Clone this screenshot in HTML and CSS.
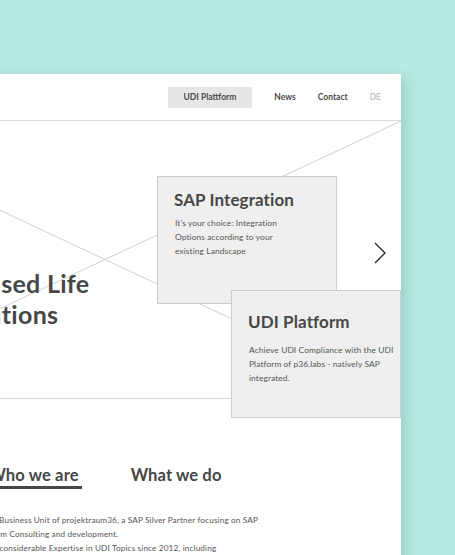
FILE: index.html
```html
<!DOCTYPE html>
<html lang="en">
<head>
<meta charset="utf-8">
<title>p36.labs</title>
<link rel="stylesheet" href="styles.css">
</head>
<body>
<div class="page">
  <header class="header">
    <nav class="nav">
      <a class="nav-item nav-active">UDI Plattform</a>
      <a class="nav-item">News</a>
      <a class="nav-item">Contact</a>
      <a class="nav-item nav-lang">DE</a>
    </nav>
  </header>
  <section class="hero">
    <svg class="hero-placeholder" viewBox="0 0 592 277" preserveAspectRatio="none">
      <line x1="0" y1="0" x2="592" y2="277"/>
      <line x1="592" y1="0" x2="0" y2="277"/>
    </svg>
    <div class="hero-copy">
      <h1 class="hero-title">Your SAP-based Life<br>Science Solutions</h1>
    </div>
    <div class="hero-cards">
      <div class="card card-first">
        <h2 class="card-title">SAP Integration</h2>
        <p class="card-text">It’s your choice: Integration<br>Options according to your<br>existing Landscape</p>
      </div>
      <div class="card card-second">
        <h2 class="card-title">UDI Platform</h2>
        <p class="card-text">Achieve UDI Compliance with the UDI<br>Platform of p36.labs - natively SAP<br>integrated.</p>
      </div>
    </div>
    <button class="hero-next" aria-label="Next">
      <svg viewBox="0 0 12 22" width="12" height="22"><polyline points="1,1 11,11 1,21"/></svg>
    </button>
  </section>
  <section class="about">
    <div class="tabs">
      <span class="tab tab-active">Who we are</span>
      <span class="tab">What we do</span>
    </div>
    <p class="about-text">p36.labs is a Business Unit of projektraum36, a SAP Silver Partner focusing on SAP<br>Cloud Platform Consulting and development.<br>p36.labs has considerable Expertise in UDI Topics since 2012, including</p>
  </section>
</div>
</body>
</html>
```
FILE: styles.css
```css
html, body {
  margin: 0;
  padding: 0;
}
body {
  background: #b9eae2;
  overflow: hidden;
  height: 555px;
  font-family: "Lato", "Liberation Sans", sans-serif;
  color: #474747;
}
.page {
  margin: 74px 0 0 -191px;
  width: 592px;
  min-height: 500px;
  background: #ffffff;
  box-shadow: 5px 4px 12px rgba(40, 110, 100, 0.22);
}
.header {
  height: 46px;
  border-bottom: 1px solid #dadada;
  display: flex;
  align-items: center;
  justify-content: flex-end;
  padding-right: 20px;
}
.nav {
  display: flex;
  align-items: center;
  gap: 22px;
}
.nav-item {
  font-size: 8.5px;
  font-weight: 700;
  color: #4a4a4a;
}
.nav-active {
  background: #e6e6e6;
  padding: 0 16px;
  height: 21px;
  line-height: 21px;
}
.nav-lang {
  color: #c2c2c2;
}
.hero {
  position: relative;
  display: flex;
  height: 277px;
  border-bottom: 1px solid #d4d4d4;
}
.hero-placeholder {
  position: absolute;
  inset: 0;
  width: 100%;
  height: 100%;
  z-index: 0;
}
.hero-placeholder line {
  stroke: #c9c9c9;
  stroke-width: 0.9;
  vector-effect: non-scaling-stroke;
}
.hero-copy {
  flex: 1;
  position: relative;
  z-index: 1;
  padding: 147px 0 0 50px;
}
.hero-title {
  margin: 0;
  font-size: 25px;
  line-height: 31px;
  font-weight: 700;
  letter-spacing: 0.3px;
  color: #474747;
  white-space: nowrap;
}
.hero-cards {
  width: 244px;
  flex-shrink: 0;
  display: flex;
  flex-direction: column;
  padding-top: 55px;
}
.card {
  position: relative;
  flex-shrink: 0;
  box-sizing: border-box;
  background: #efefef;
  border: 1px solid #cdcdcd;
  padding: 12px 8px 0 16px;
}
.card-first {
  z-index: 1;
  width: 180px;
  height: 128px;
}
.card-second {
  z-index: 2;
  width: 170px;
  height: 128px;
  margin-top: -14px;
  align-self: flex-end;
  padding-top: 20px;
}
.card-title {
  margin: 0;
  font-size: 17px;
  line-height: 22px;
  font-weight: 700;
  letter-spacing: 0.1px;
  color: #474747;
}
.card-text {
  margin: 5px 0 0 1px;
  font-size: 8.4px;
  line-height: 14px;
  color: #555555;
  letter-spacing: 0.1px;
  white-space: nowrap;
}
.card-second .card-text {
  margin-top: 10px;
}
.hero-next {
  position: absolute;
  right: 15px;
  top: 121px;
  z-index: 1;
  padding: 0;
  border: 0;
  background: none;
  width: 12px;
  height: 22px;
}
.hero-next svg {
  display: block;
}
.hero-next polyline {
  fill: none;
  stroke: #222222;
  stroke-width: 1.3;
}
.about {
  padding-top: 65px;
}
.tabs {
  display: flex;
  justify-content: center;
  gap: 46px;
}
.tab {
  font-size: 16.6px;
  line-height: 22px;
  font-weight: 700;
  color: #474747;
  letter-spacing: 0.1px;
  padding: 0 3px 0;
  border-bottom: 3px solid transparent;
}
.tab-active {
  border-bottom-color: #474747;
}
.about-text {
  margin: 24px 0 0 142px;
  font-size: 8.2px;
  line-height: 14px;
  color: #555555;
  letter-spacing: 0.15px;
  white-space: nowrap;
}
```
